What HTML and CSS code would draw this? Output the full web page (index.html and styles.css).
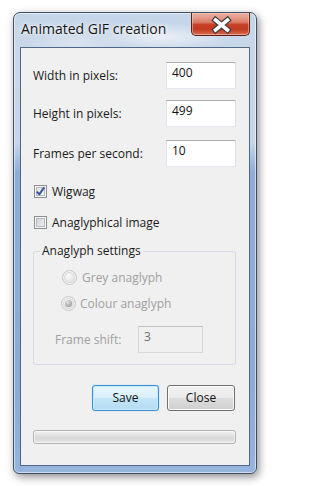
FILE: index.html
```html
<!DOCTYPE html>
<html lang="en">
<head>
<meta charset="utf-8">
<title>Animated GIF creation</title>
<link rel="stylesheet" href="styles.css">
</head>
<body>
<div class="screen">
  <div class="window">
    <div class="titlebar">
      <span class="title">Animated GIF creation</span>
      <div class="close-btn" aria-label="Close">
        <svg class="close-x" width="59" height="23" viewBox="0 0 59 23">
          <path d="M24.5 7 L36.5 17 M36.5 7 L24.5 17" stroke="#3a3a3a" stroke-width="6" stroke-linecap="square" fill="none"/>
          <path d="M24.5 7 L36.5 17 M36.5 7 L24.5 17" stroke="#ffffff" stroke-width="3.6" stroke-linecap="square" fill="none"/>
        </svg>
      </div>
    </div>
    <div class="client">
      <div class="field-row">
        <span class="label">Width in pixels:</span>
        <div class="textbox">400</div>
      </div>
      <div class="field-row row2">
        <span class="label">Height in pixels:</span>
        <div class="textbox">499</div>
      </div>
      <div class="field-row row3">
        <span class="label">Frames per second:</span>
        <div class="textbox">10</div>
      </div>

      <div class="check-row first">
        <span class="checkbox">
          <svg width="11" height="11" viewBox="0 0 11 11">
            <path d="M1.8 5.6 L4.3 8.4 L9.2 1.4" stroke="#3d58a3" stroke-width="2" fill="none" stroke-linejoin="round"/>
          </svg>
        </span>
        <span class="check-text">Wigwag</span>
      </div>
      <div class="check-row second">
        <span class="checkbox unchecked"></span>
        <span class="check-text">Anaglyphical image</span>
      </div>

      <fieldset class="group">
        <legend>Anaglyph settings</legend>
        <div class="radio-row">
          <span class="radio"></span>
          <span class="disabled-text">Grey anaglyph</span>
        </div>
        <div class="radio-row second">
          <span class="radio selected"></span>
          <span class="disabled-text">Colour anaglyph</span>
        </div>
        <div class="shift-row">
          <span class="disabled-text shift-label">Frame shift:</span>
          <div class="textbox disabled">3</div>
        </div>
      </fieldset>

      <div class="buttons">
        <div class="btn default">Save</div>
        <div class="btn normal">Close</div>
      </div>

      <div class="progress"></div>
    </div>
  </div>
</div>
</body>
</html>
```

FILE: styles.css
```css
* { box-sizing: border-box; }

html, body {
  margin: 0;
  padding: 0;
  background: #ffffff;
}

body {
  font-family: "Open Sans", "Noto Sans", "DejaVu Sans", sans-serif;
  font-size: 12px;
  color: #1a1a1a;
  width: 269px;
  height: 486px;
  overflow: hidden;
}

.screen {
  padding: 12px 0 0 13px;
}

.window {
  width: 244px;
  height: 462px;
  border: 1px solid #3f4f63;
  border-radius: 7px 7px 6px 6px;
  background:
    radial-gradient(ellipse 70px 14px at 150px 24px, rgba(255,255,255,0.6), rgba(255,255,255,0) 100%),
    radial-gradient(ellipse 50px 12px at 60px 30px, rgba(255,255,255,0.35), rgba(255,255,255,0) 100%),
    linear-gradient(to bottom, #c4d5ea 0px, #c9d7e9 34px, #c7d5e8 130px, #a9c1e2 145px, #8eacd6 160px, #8cabd6 380px, #97b4dd 462px);
  box-shadow:
    inset 0 0 0 1px rgba(255,255,255,0.55),
    2px 3px 9px rgba(0,0,0,0.45);
  display: flex;
  flex-direction: column;
}

.titlebar {
  height: 34px;
  display: flex;
  justify-content: space-between;
  align-items: flex-start;
  padding-left: 7px;
}

.title {
  font-size: 14px;
  line-height: 18px;
  padding-top: 7px;
  color: #151515;
  text-shadow: 0 0 6px rgba(255,255,255,0.95), 0 0 3px rgba(255,255,255,0.9);
}

.close-btn {
  width: 59px;
  height: 23px;
  margin-right: 6px;
  border: 1px solid #5e2116;
  border-top: none;
  border-radius: 0 0 5px 5px;
  background: linear-gradient(to bottom,
    #eab0a2 0px, #e39a88 5px, #d8735d 10px,
    #c8432a 11px, #c23a20 16px, #cf5a3e 20px, #e08b6f 23px);
  box-shadow: inset 0 0 0 1px rgba(255,220,210,0.45);
  position: relative;
}

.close-x {
  position: absolute;
  left: -1px;
  top: 0;
}

.client {
  height: 419px;
  margin: 0 6px 7px 6px;
  background: #f0f0f0;
  border: 1px solid #4f6888;
  padding: 14px 13px 0 12px;
}

.field-row {
  height: 27px;
  display: flex;
  justify-content: space-between;
  align-items: center;
}
.field-row.row2 { margin-top: 11px; }
.field-row.row3 { margin-top: 13px; }

.label {
  line-height: 16px;
}

.textbox {
  width: 70px;
  height: 27px;
  line-height: 16px;
  padding: 2px 5px 0 5px;
  background: #ffffff;
  border: 1px solid;
  border-color: #abadb3 #dbdfe6 #e3e9ef #e2e3ea;
  color: #111111;
}

.textbox.disabled {
  width: 65px;
  background: #f0f0f0;
  border-color: #c3c3c3 #d6d6d6 #d9d9d9 #d6d6d6;
  color: #6d6d6d;
}

.check-row {
  height: 13px;
  display: flex;
  align-items: center;
  gap: 5px;
  padding-left: 1px;
}
.check-row.first { margin-top: 18px; }
.check-row.second { margin-top: 18px; }

.check-text {
  line-height: 13px;
}

.checkbox {
  width: 13px;
  height: 13px;
  flex: none;
  border: 1px solid #8e8f8f;
  background: linear-gradient(135deg, #dcdee2 0%, #eeeeee 60%, #f8f8f8 100%);
  box-shadow: inset 0 0 0 1px #f5f5f5, inset 0 0 0 2px #b7bcc3;
  display: flex;
  align-items: center;
  justify-content: center;
}
.checkbox.unchecked {
  background: linear-gradient(135deg, #c9ccd1 0%, #e2e3e5 55%, #f6f6f6 100%);
}

.group {
  margin: 14px 0 0 0;
  padding: 0 0 11px 0;
  border: 1px solid #d5dbe0;
  border-radius: 3px;
  min-width: 0;
}

.group legend {
  margin-left: 6px;
  padding: 0 2px;
  line-height: 16px;
  color: #1a1a1a;
}

.radio-row {
  height: 15px;
  display: flex;
  align-items: center;
  gap: 5px;
  margin-top: 11px;
  padding-left: 28px;
}
.radio-row.second {
  padding-left: 27px;
  gap: 4px;
}

.radio {
  width: 15px;
  height: 15px;
  flex: none;
  border-radius: 50%;
  border: 1px solid #c9c9c9;
  background: radial-gradient(circle at 40% 35%, #fafafa 0%, #e9e9e9 45%, #dcdcdc 100%);
  box-shadow: inset 0 0 0 1px #f7f7f7, inset 0 0 0 2px #d9d9d9;
  position: relative;
}
.radio.selected::after {
  content: "";
  position: absolute;
  left: 3px;
  top: 3px;
  width: 7px;
  height: 7px;
  border-radius: 50%;
  background: radial-gradient(circle at 40% 35%, #e4e4e4 0%, #ababab 60%, #8f8f8f 100%);
}

.disabled-text {
  color: #a0a0a0;
  line-height: 15px;
}

.shift-row {
  height: 27px;
  margin-top: 15px;
  display: flex;
  align-items: center;
  padding-left: 21px;
}

.shift-label {
  width: 83px;
  line-height: 16px;
}

.buttons {
  margin-top: 20px;
  display: flex;
  justify-content: flex-end;
  gap: 8px;
  padding-right: 1px;
}

.btn {
  height: 26px;
  border-radius: 3px;
  text-align: center;
  line-height: 24px;
  color: #111111;
}

.btn.default {
  width: 67px;
  border: 1px solid #3c8fd2;
  background: linear-gradient(to bottom, #e8f6fd 0%, #d9f0fc 48%, #c2e5f8 52%, #b4dcf3 100%);
  box-shadow: inset 0 0 0 1px #c6ecfc, 0 0 1px #7fc4ee;
}

.btn.normal {
  width: 68px;
  border: 1px solid #707070;
  background: linear-gradient(to bottom, #f2f2f2 0%, #ebebeb 48%, #dddddd 52%, #cfcfcf 100%);
  box-shadow: inset 0 0 0 1px #fbfbfb;
}

.progress {
  margin-top: 19px;
  height: 14px;
  border: 1px solid #b2b2b2;
  border-radius: 3px;
  background: linear-gradient(to bottom, #f2f2f2 0%, #e4e4e4 30%, #d9d9d9 55%, #dedede 80%, #e8e8e8 100%);
  box-shadow: inset 0 0 0 1px rgba(255,255,255,0.6);
}
```
